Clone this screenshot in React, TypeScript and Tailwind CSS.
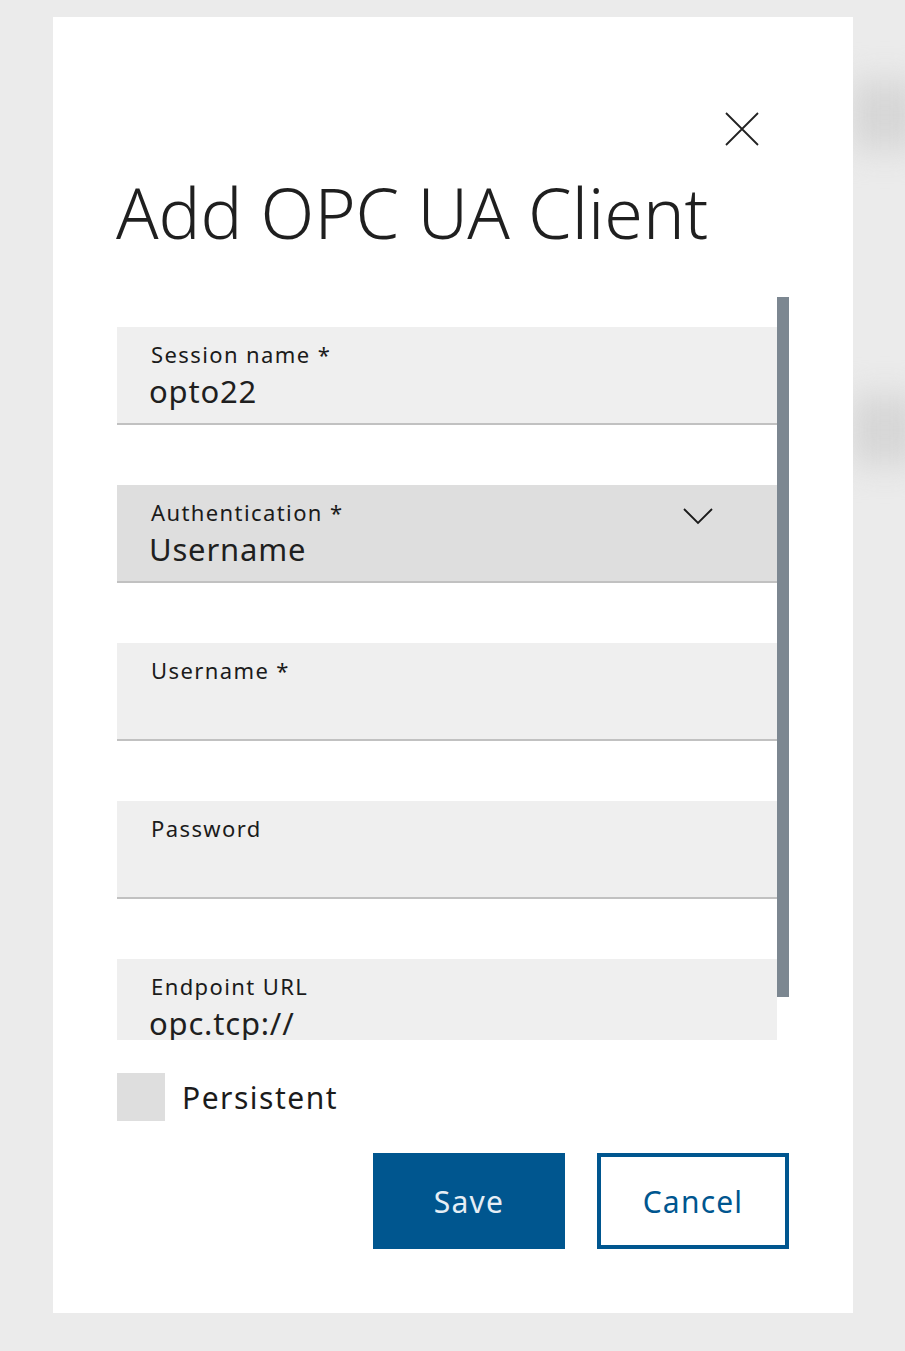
import React from "react";

const fieldFont = { fontFamily: '"Noto Sans", "Liberation Sans", sans-serif' };

const Field = ({
  label,
  value,
  active,
  select,
  last,
}: {
  label: string;
  value?: string;
  active?: boolean;
  select?: boolean;
  last?: boolean;
}) => {
  return (
    <div
      className={`relative h-[98px] shrink-0 px-[34px] pt-[12px] ${
        active ? "bg-[#dedede]" : "bg-[#efefef]"
      } ${last ? "" : "border-b-2 border-[#c1c1c1]"}`}
    >
      <div className="text-[22px] leading-[31px] tracking-[1.4px] text-[#1b1b1b]">
        {label}
      </div>
      <div className="mt-[3px] text-[31px] leading-[36px] tracking-[0.8px] text-[#1f1f1f] -ml-[2px]">
        {value}
      </div>
      {select && (
        <svg
          className="absolute right-[64px] top-[22px]"
          width="30"
          height="18"
          viewBox="0 0 30 18"
          fill="none"
        >
          <path d="M1 2 L15 16 L29 2" stroke="#1b1b1b" strokeWidth="1.8" />
        </svg>
      )}
    </div>
  );
};

const App = () => {
  return (
    <div
      className="relative min-h-[1351px] w-full overflow-hidden bg-[#ebebeb] pt-[17px]"
      style={fieldFont}
    >
      <div className="absolute left-[850px] top-[80px] h-[70px] w-[70px] bg-[#d6d6d6] blur-[16px]" />
      <div className="absolute left-[850px] top-[395px] h-[70px] w-[70px] bg-[#d6d6d6] blur-[16px]" />
      <div className="relative ml-[53px] flex h-[1296px] w-[800px] flex-col bg-white px-[64px]">
        <div className="flex justify-end pt-[95px] pr-[30px]">
          <svg width="34" height="34" viewBox="0 0 34 34" fill="none">
            <path d="M1 1 L33 33 M33 1 L1 33" stroke="#222" strokeWidth="1.8" />
          </svg>
        </div>
        <h1 className="mt-[22px] text-[70px] font-light leading-[88px] text-[#1f1f1f] -ml-[1px]">
          Add OPC UA Client
        </h1>
        <div className="mt-[41px] flex h-[743px]">
          <div className="flex w-[660px] flex-col gap-[60px] overflow-hidden pt-[30px]">
            <Field label="Session name *" value="opto22" />
            <Field label="Authentication *" value="Username" active select />
            <Field label="Username *" />
            <Field label="Password" />
            <Field label="Endpoint URL" value="opc.tcp://" last />
          </div>
          <div className="w-[12px]">
            <div className="h-[700px] w-[12px] bg-[#7c8791]" />
          </div>
        </div>
        <div className="mt-[33px] flex items-center gap-[17px]">
          <div className="h-[48px] w-[48px] bg-[#dedede]" />
          <span className="text-[30px] tracking-[1.5px] text-[#1b1b1b]">
            Persistent
          </span>
        </div>
        <div className="mt-[32px] flex justify-end gap-[32px]">
          <button className="h-[96px] w-[192px] bg-[#00568f] text-[30px] tracking-[1.2px] text-[#e6eef5]">
            Save
          </button>
          <button className="h-[96px] w-[192px] border-4 border-[#00568f] bg-white text-[30px] tracking-[1.2px] text-[#00568f]">
            Cancel
          </button>
        </div>
      </div>
    </div>
  );
};

export default App;
